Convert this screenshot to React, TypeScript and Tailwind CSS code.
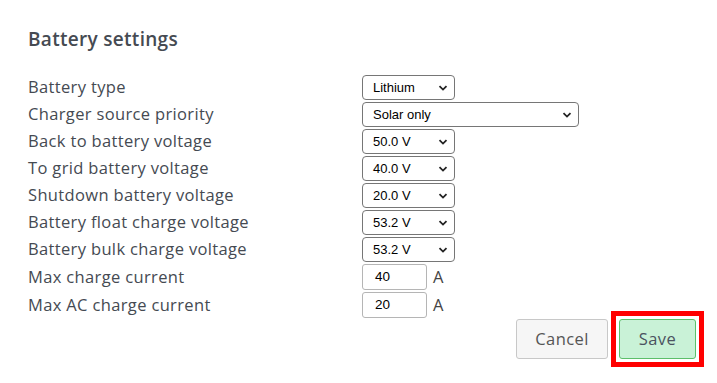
import React from "react"

const font = { fontFamily: '"Open Sans", "DejaVu Sans", sans-serif' }

const rows: { label: string; value: string; wide?: boolean }[] = [
  { label: "Battery type", value: "Lithium" },
  { label: "Charger source priority", value: "Solar only", wide: true },
  { label: "Back to battery voltage", value: "50.0 V" },
  { label: "To grid battery voltage", value: "40.0 V" },
  { label: "Shutdown battery voltage", value: "20.0 V" },
  { label: "Battery float charge voltage", value: "53.2 V" },
  { label: "Battery bulk charge voltage", value: "53.2 V" },
]

function Select({ value, wide }: { value: string; wide?: boolean }) {
  return (
    <div
      className={`flex h-[25px] items-center justify-between rounded-[4px] border border-[#767676] bg-white pl-[10px] pr-[5px] text-[13px] text-black font-['Liberation_Sans',Arial,sans-serif] ${
        wide ? "w-[217px]" : "w-[93px]"
      }`}
    >
      <span>{value}</span>
      <svg width="10" height="10" viewBox="0 0 10 10" className="mr-[1px]">
        <path d="M1.5 3.2 L5 6.6 L8.5 3.2" fill="none" stroke="#222" strokeWidth="1.8" />
      </svg>
    </div>
  )
}

function NumberInput({ value }: { value: string }) {
  return (
    <div className="flex items-center gap-[6px]">
      <div className="flex h-[26px] w-[65px] items-center rounded-[3px] border border-[#b5b5b5] bg-white pl-[12px] text-[13.5px] text-black font-['Liberation_Sans',Arial,sans-serif]">
        {value}
      </div>
      <span className="text-[16.5px] text-[#444]">A</span>
    </div>
  )
}

const labelCls = "flex items-center text-[16.5px] tracking-[0.35px] text-[#454a52]"

export default function App() {
  return (
    <div className="h-[383px] w-[717px] bg-white text-[#444]" style={font}>
      <div className="pl-[28px] pr-[21px] pt-[26px]">
        <h2 className="text-[19px] font-semibold leading-[26px] tracking-[0.3px] text-[#454a52]">Battery settings</h2>

        <div className="mt-[23px] grid grid-cols-[334px_auto] gap-y-[2px]">
          {rows.map((r) => (
            <React.Fragment key={r.label}>
              <div className={labelCls}>{r.label}</div>
              <div>
                <Select value={r.value} wide={r.wide} />
              </div>
            </React.Fragment>
          ))}
          <div className={labelCls}>Max charge current</div>
          <NumberInput value="40" />
          <div className={labelCls}>Max AC charge current</div>
          <NumberInput value="20" />
        </div>

        <div className="mt-[1px] flex justify-end gap-[11px]">
          <button className="h-[40px] w-[92px] rounded-[3px] border border-[#c8c8c8] bg-[#f6f6f6] text-[16.5px] tracking-[0.4px] text-[#555]">
            Cancel
          </button>
          <div className="relative">
            <button className="h-[40px] w-[77px] rounded-[3px] border border-[#5cbf6a] bg-[#c9f2d7] text-[16.5px] tracking-[0.4px] text-[#4b5260]">
              Save
            </button>
            <span className="pointer-events-none absolute -inset-[8px] border-[5px] border-[#ff0000]" />
          </div>
        </div>
      </div>
    </div>
  )
}
